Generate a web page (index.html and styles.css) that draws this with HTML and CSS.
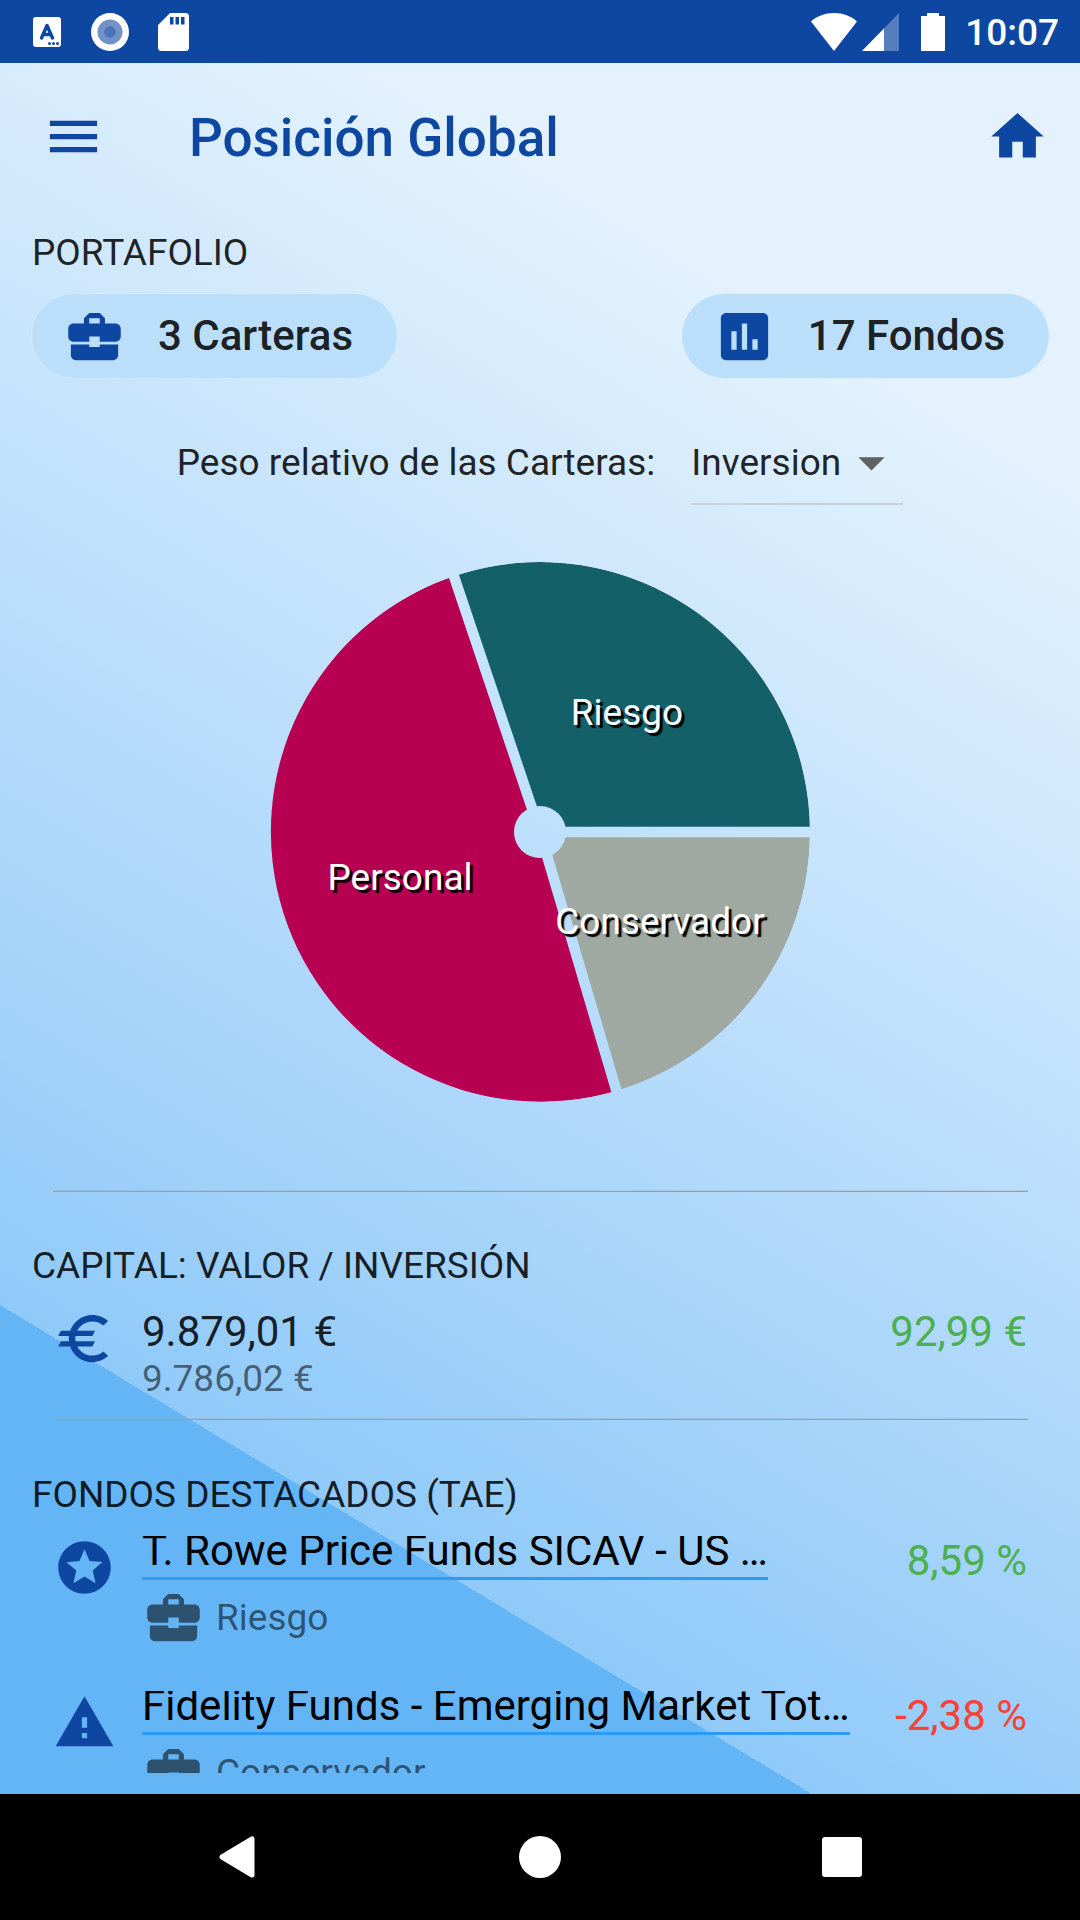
FILE: index.html
```html
<!DOCTYPE html>
<html lang="es">
<head>
<meta charset="utf-8">
<meta name="viewport" content="width=device-width, initial-scale=1">
<title>Posición Global</title>
<link rel="stylesheet" href="styles.css">
</head>
<body>
<svg class="sprite" aria-hidden="true">
  <symbol id="briefcase" viewBox="0 0 24 24"><path d="M10 16v-1H3.01L3 19c0 1.11.89 2 2 2h14c1.11 0 2-.89 2-2v-4h-7v1h-4zm10-9h-4.01V5l-2-2h-4l-2 2v2H4c-1.1 0-2 .9-2 2v3c0 1.11.89 2 2 2h6v-2h4v2h6c1.1 0 2-.9 2-2V9c0-1.1-.9-2-2-2zm-6 0h-4V5h4v2z"/></symbol>
</svg>
<div class="screen">
  <div class="statusbar">
    <div class="status-left">
      <svg width="30" height="32" viewBox="0 0 30 32"><rect x="1" y="1" width="28" height="30" rx="3" fill="#fff"/><path d="M9.500 22 15 9.500 20.500 22M11.500 18.500h7" fill="none" stroke="#0d47a1" stroke-width="3.400" stroke-linecap="round" stroke-linejoin="round"/><g fill="#0d47a1"><circle cx="17.500" cy="27.500" r="1.500"/><circle cx="21.500" cy="27.500" r="1.500"/><circle cx="25.500" cy="27.500" r="1.500"/></g></svg>
      <svg width="38" height="38" viewBox="0 0 38 38"><circle cx="19" cy="19" r="19" fill="#fff"/><circle cx="19" cy="19" r="12.500" fill="#7291c7"/><circle cx="19" cy="19" r="5.700" fill="#4a74b8"/></svg>
      <svg width="31" height="38" viewBox="0 0 31 38"><path d="M12 0h15.500a3.500 3.500 0 0 1 3.500 3.500v31a3.500 3.500 0 0 1-3.500 3.500h-24A3.500 3.500 0 0 1 0 34.500V12z" fill="#fff"/><path d="M12 4h3.500v7.500H12zM17.500 4H21v7.500h-3.500zM23 4h3.500v7.500H23z" fill="#0d47a1"/></svg>
    </div>
    <div class="status-right">
      <svg width="46" height="38" viewBox="0 0 46 38"><path d="M23 38 0 8.500C6 3 14 0 23 0s17 3 23 8.500z" fill="#fff"/></svg>
      <svg class="signal" width="37" height="38" viewBox="0 0 37 38"><path d="M37 0v38H0z" fill="#567ebd"/><path d="M22 15.400V38H0z" fill="#fff"/></svg>
      <svg class="battery" width="24" height="38" viewBox="0 0 24 38"><path d="M6 0h12v3h6v35H0V3h6z" fill="#fff"/></svg>
      <span class="clock">10:07</span>
    </div>
  </div>

  <header class="appbar">
    <button class="icon-button" type="button" aria-label="Menú"><svg class="icon" viewBox="0 0 24 24"><path d="M3 18h18v-2H3v2zm0-5h18v-2H3v2zm0-7v2h18V6H3z"/></svg></button>
    <h1 class="title">Posición Global</h1>
    <button class="icon-button" type="button" aria-label="Inicio"><svg class="icon" viewBox="0 0 24 24"><path d="M10 20v-6h4v6h5v-8h3L12 3 2 12h3v8z"/></svg></button>
  </header>

  <main class="content">
    <h2 class="heading">PORTAFOLIO</h2>
    <div class="chips">
      <button class="chip" type="button"><svg class="icon"><use href="#briefcase"/></svg>3 Carteras</button>
      <button class="chip" type="button"><svg class="icon" viewBox="0 0 24 24"><path d="M19 3H5c-1.100 0-2 .9-2 2v14c0 1.100.9 2 2 2h14c1.100 0 2-.9 2-2V5c0-1.100-.9-2-2-2zM9 17H7v-7h2v7zm4 0h-2V7h2v10zm4 0h-2v-4h2v4z"/></svg>17 Fondos</button>
    </div>

    <div class="weight">
      <label class="weight-label" for="metric">Peso relativo de las Carteras:</label>
      <div class="dropdown">
        <select id="metric" class="dropdown-select"><option>Inversion</option></select>
        <svg class="dropdown-arrow" viewBox="0 0 24 24"><path d="M7 10l5 5 5-5z"/></svg>
      </div>
    </div>

    <svg class="pie" viewBox="-270 -270 540 540" role="img" aria-label="Peso relativo de las carteras">
      <defs>
        <mask id="gaps" maskUnits="userSpaceOnUse" x="-270" y="-270" width="540" height="540">
          <circle r="270" fill="#fff"/>
          <circle r="26" fill="#000"/>
          <path d="M0 0H280M0 0-89.300-265.400M0 0 79.300 268.500" stroke="#000" stroke-width="10.500"/>
        </mask>
      </defs>
      <g mask="url(#gaps)">
        <path fill="#146068" d="M0 0H270A270 270 0 0 0-86.100-255.900z"/>
        <path fill="#b80052" d="M0 0-86.100-255.900A270 270 0 0 0 76.500 258.900z"/>
        <path fill="#a0a9a1" d="M0 0 76.500 258.900A270 270 0 0 0 270 0z"/>
      </g>
      <text class="pie-label" x="87" y="-107">Riesgo</text>
      <text class="pie-label" x="-140" y="58">Personal</text>
      <text class="pie-label" x="120" y="102">Conservador</text>
    </svg>

    <hr class="divider">
    <h2 class="heading">CAPITAL: VALOR / INVERSIÓN</h2>
    <div class="row">
      <svg class="icon" viewBox="0 0 24 24"><path d="M15 18.500c-2.510 0-4.680-1.420-5.760-3.500H15l1-2H8.580c-.05-.33-.08-.66-.08-1s.03-.67.08-1H15l1-2H9.240C10.320 6.920 12.500 5.500 15 5.500c1.610 0 3.090.59 4.230 1.570L21 5.300C19.410 3.870 17.300 3 15 3c-3.920 0-7.240 2.510-8.480 6H3l-1 2h4.060c-.04.33-.06.66-.06 1s.02.67.06 1H3l-1 2h4.520c1.240 3.490 4.560 6 8.480 6 2.310 0 4.410-.87 6-2.300l-1.780-1.770c-1.130.98-2.600 1.570-4.220 1.570z"/></svg>
      <div class="row-body">
        <div class="amount">9.879,01 €</div>
        <div class="amount-sub">9.786,02 €</div>
      </div>
      <div class="value gain">92,99 €</div>
    </div>
    <hr class="divider divider-close">

    <h2 class="heading">FONDOS DESTACADOS (TAE)</h2>
    <div class="funds">
      <div class="row">
        <svg class="icon" viewBox="0 0 24 24"><path d="M11.990 2C6.470 2 2 6.480 2 12s4.470 10 9.990 10C17.520 22 22 17.520 22 12S17.520 2 11.990 2zm4.240 16L12 15.450 7.770 18l1.120-4.810-3.730-3.230 4.920-.42L12 5l1.920 4.530 4.920.42-3.730 3.230L16.230 18z"/></svg>
        <div class="row-body">
          <a class="fund-name" href="#">T. Rowe Price Funds SICAV - US …</a>
          <div class="fund-portfolio"><svg class="icon"><use href="#briefcase"/></svg>Riesgo</div>
        </div>
        <div class="value gain">8,59 %</div>
      </div>
      <div class="row">
        <svg class="icon" viewBox="0 0 24 24"><path d="M1 21h22L12 2 1 21zm12-3h-2v-2h2v2zm0-4h-2v-4h2v4z"/></svg>
        <div class="row-body">
          <a class="fund-name" href="#">Fidelity Funds - Emerging Market Tot…</a>
          <div class="fund-portfolio"><svg class="icon"><use href="#briefcase"/></svg>Conservador</div>
        </div>
        <div class="value loss">-2,38 %</div>
      </div>
    </div>
  </main>
</div>

<nav class="navbar">
  <button class="nav-button" type="button" aria-label="Atrás"><svg width="54" height="42" viewBox="0 0 54 42"><path d="M38 3v36L8 21z" transform="translate(3 0)" fill="#fff" stroke="#fff" stroke-width="5" stroke-linejoin="round"/></svg></button>
  <button class="nav-button" type="button" aria-label="Inicio"><svg width="42" height="42" viewBox="0 0 42 42"><circle cx="21" cy="21" r="21" fill="#fff"/></svg></button>
  <button class="nav-button" type="button" aria-label="Recientes"><svg width="40" height="40" viewBox="0 0 40 40"><rect width="40" height="40" rx="3" fill="#fff"/></svg></button>
</nav>
</body>
</html>
```
FILE: styles.css
```css
* {
  box-sizing: border-box;
}

body {
  margin: 0;
  height: 100vh;
  display: flex;
  flex-direction: column;
  font-family: Roboto, "Liberation Sans", sans-serif;
  font-size: 37px;
  line-height: 46px;
  color: rgba(0, 0, 0, 0.87);
}

button {
  border: 0;
  padding: 0;
  background: none;
  font: inherit;
  color: inherit;
}

.sprite {
  display: none;
}

.screen {
  flex: 1;
  min-height: 0;
  display: flex;
  flex-direction: column;
  background: linear-gradient(31.05deg, #64b5f6 20%, #90caf9 20%, #bbdefb 50%, #e3f2fd 80%);
}

.icon {
  flex: none;
  display: block;
  width: 63px;
  height: 63px;
  fill: #0d47a1;
}

/* Status bar */
.statusbar {
  flex: none;
  height: 63px;
  display: flex;
  justify-content: space-between;
  padding: 0 21px 0 32px;
  background: #0d47a1;
}

.status-left,
.status-right {
  display: flex;
  align-items: center;
}

.status-left {
  gap: 29px;
}

.signal {
  margin-left: 5px;
}

.battery {
  margin: 0 20px 0 22px;
}

.clock {
  padding-top: 2px;
  font-size: 37px;
  font-weight: 500;
  color: #fff;
}

/* App bar */
.appbar {
  flex: none;
  height: 147px;
  display: flex;
  align-items: center;
  padding: 0 31px 0 42px;
}

.title {
  flex: 1;
  margin: 0;
  padding: 3px 0 0 84px;
  font-size: 53px;
  font-weight: 500;
  line-height: 63px;
  color: #0d47a1;
}

/* Content */
.content {
  flex: 1;
  min-height: 0;
  display: flex;
  flex-direction: column;
  padding: 20px 0 21px;
}

.heading {
  flex: none;
  margin: 0 32px 18px;
  font-size: 37px;
  font-weight: 400;
}

.chips {
  display: flex;
  justify-content: space-between;
  padding: 0 31px 0 32px;
}

.chip {
  height: 84px;
  display: flex;
  align-items: center;
  gap: 32px;
  padding: 0 44px 0 31px;
  border-radius: 42px;
  background: #bbdefb;
  box-shadow: 0 0 0 1px rgba(227, 242, 253, 0.3);
  font-size: 42px;
  font-weight: 500;
}

.weight {
  display: flex;
  justify-content: center;
  gap: 36px;
  margin-top: 53px;
}

.weight-label {
  line-height: 63px;
}

.dropdown {
  display: grid;
}

.dropdown-select,
.dropdown-arrow {
  grid-area: 1 / 1;
}

.dropdown-select {
  appearance: none;
  width: 212px;
  height: 74px;
  margin: 0;
  padding: 0 0 9px;
  border: 0;
  border-bottom: 2px solid #c8d0d6;
  border-radius: 0;
  background: none;
  font: inherit;
  color: inherit;
}

.dropdown-arrow {
  justify-self: end;
  width: 63px;
  height: 63px;
  fill: #616161;
  pointer-events: none;
}

.pie {
  flex: none;
  align-self: center;
  width: 50%;
  margin: 57px 0 89px;
}

.pie-label {
  font-size: 37px;
  fill: #fff;
  text-anchor: middle;
  text-shadow: 3px 3px 1px #000;
}

.divider {
  flex: none;
  height: 1px;
  margin: 0 52px 51px 53px;
  border: 0;
  background: #96a0aa;
  box-shadow: 0 -1px rgba(158, 158, 158, 0.3);
}

.divider-close {
  margin-top: 18px;
  margin-bottom: 52px;
}

.row {
  flex: none;
  display: flex;
  gap: 26px;
  padding: 0 53px;
}

.row-body {
  flex: 1;
  min-width: 0;
}

.amount,
.value {
  font-size: 42px;
  line-height: 50px;
}

.amount-sub,
.fund-portfolio {
  line-height: 44px;
  color: rgba(0, 0, 0, 0.54);
}

.gain {
  color: #4caf50;
}

.loss {
  color: #f44336;
}

.funds {
  flex: 1;
  min-height: 0;
  display: flex;
  flex-direction: column;
  gap: 42px;
  overflow: hidden;
}

.fund-name {
  display: block;
  width: fit-content;
  max-width: 100%;
  padding-bottom: 11px;
  border-bottom: 3px solid #2d9bf3;
  overflow: hidden;
  white-space: nowrap;
  text-overflow: ellipsis;
  font-size: 42px;
  line-height: 30px;
  color: #000;
  text-decoration: none;
}

.fund-portfolio {
  display: flex;
  align-items: center;
  gap: 11px;
  margin-top: 6px;
}

.fund-portfolio .icon {
  fill: #2d526f;
}

/* System navigation */
.navbar {
  flex: none;
  height: 126px;
  display: flex;
  justify-content: center;
  background: #000;
}

.nav-button {
  width: 28%;
  display: flex;
  align-items: center;
  justify-content: center;
}
```
